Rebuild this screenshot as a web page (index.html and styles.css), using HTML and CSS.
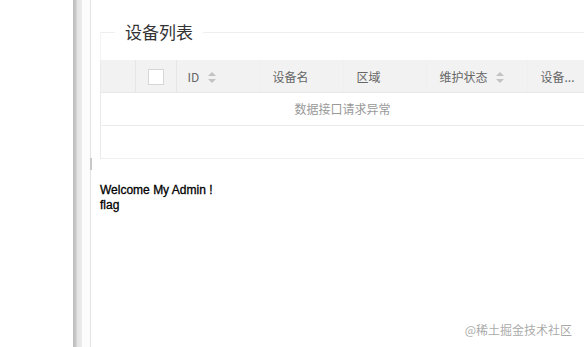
FILE: index.html
```html
<!DOCTYPE html>
<html lang="zh">
<head>
<meta charset="utf-8">
<link rel="stylesheet" href="styles.css">
</head>
<body>
<div class="page">
  <div class="gutter"></div>
  <div class="bar"></div>
  <div class="gap"></div>
  <div class="divider"><span class="handle"></span></div>
  <main class="main">
    <fieldset class="field">
      <legend class="legend">设备列表</legend>
      <div class="table-box">
        <table class="grid">
          <colgroup>
            <col class="c-num"><col class="c-check"><col class="c-id"><col class="c-name"><col class="c-area"><col class="c-state"><col class="c-more">
          </colgroup>
          <thead>
            <tr>
              <th></th>
              <th class="center"><span class="checkbox"></span></th>
              <th class="id">ID <svg class="sort" viewBox="0 0 8 11" width="8" height="11"><path d="M4 0 L8 4 H0 Z M0 7 H8 L4 11 Z" fill="#c2c2c2"/></svg></th>
              <th>设备名</th>
              <th>区域</th>
              <th>维护状态 <svg class="sort" viewBox="0 0 8 11" width="8" height="11"><path d="M4 0 L8 4 H0 Z M0 7 H8 L4 11 Z" fill="#c2c2c2"/></svg></th>
              <th>设备...</th>
            </tr>
          </thead>
        </table>
        <div class="none">数据接口请求异常</div>
        <div class="foot"></div>
      </div>
    </fieldset>
    <p class="welcome">Welcome My Admin !<br>flag</p>
  </main>
</div>
<div class="mark">@稀土掘金技术社区</div>
</body>
</html>
```
FILE: styles.css
```css
html, body {
  margin: 0;
  padding: 0;
  background: #fff;
  height: 100%;
  overflow: hidden;
}
body {
  font-family: "Liberation Sans", "Noto Sans CJK SC", sans-serif;
}
.page {
  display: flex;
  height: 347px;
}
.gutter {
  width: 73px;
  flex: none;
}
.bar {
  width: 9px;
  flex: none;
  background: linear-gradient(to right, #bdbdbd 0, #c9c9c9 3px, #e2e2e2 4px, #ececec 9px);
}
.gap {
  width: 8px;
  flex: none;
  background: #fcfcfc;
}
.divider {
  width: 1px;
  flex: none;
  background: #e4e4e4;
  position: relative;
}
.handle {
  position: absolute;
  left: 0;
  top: 158px;
  width: 2px;
  height: 12px;
  background: #c8c8c8;
}
.main {
  flex: 1;
  min-width: 0;
  padding: 20px 0 0 9px;
  overflow: hidden;
}
.field {
  margin: 0;
  padding: 16px 0 0 0;
  border: none;
  border-top: 1px solid #eeeeee;
  border-left: 1px solid #f3f3f3;
  min-width: 0;
}
.legend {
  margin-left: 14px;
  padding: 0 10px;
  font-family: "Noto Sans CJK SC", sans-serif;
  font-size: 17px;
  line-height: 24px;
  color: #333;
}
.table-box {
  margin-left: -1px;
  overflow: hidden;
  border-left: 1px solid #eaeaea;
}
.grid {
  border-collapse: collapse;
  table-layout: fixed;
  width: 506px;
  font-family: "Noto Sans CJK SC", sans-serif;
}
.c-num { width: 34px; }
.c-check { width: 41px; }
.c-id { width: 83px; }
.c-name { width: 84px; }
.c-area { width: 83px; }
.c-state { width: 101px; }
.c-more { width: 80px; }
.grid th {
  height: 32px;
  padding: 0 0 0 13px;
  background: #f2f2f2;
  border-right: 1px solid #efefef;
  border-bottom: 1px solid #e8e8e8;
  font-size: 12px;
  font-weight: normal;
  color: #666;
  text-align: left;
  white-space: nowrap;
  overflow: hidden;
}
.grid th.id {
  padding-left: 11px;
}
.grid th:first-child,
.grid th.center {
  padding: 0;
  text-align: center;
  border-right: 1px solid #e6e6e6;
}
.checkbox {
  display: inline-block;
  width: 14px;
  height: 14px;
  border: 1px solid #d6d6d6;
  background: #fff;
  vertical-align: middle;
}
.sort {
  vertical-align: middle;
  margin-left: 6px;
  position: relative;
  top: -1px;
}
.none {
  height: 32px;
  line-height: 32px;
  text-align: center;
  font-family: "Noto Sans CJK SC", sans-serif;
  font-size: 12px;
  color: #999;
  border-bottom: 1px solid #ececec;
}
.foot {
  height: 32px;
  border-bottom: 1px solid #f0f0f0;
}
.welcome {
  margin: 24px 0 0 0;
  font-family: "Liberation Sans", sans-serif;
  font-size: 12px;
  line-height: 15px;
  color: #000;
  -webkit-text-stroke: 0.3px #000;
}
.mark {
  position: absolute;
  right: 12px;
  bottom: 9px;
  font-family: "Noto Sans CJK SC", sans-serif;
  font-size: 12px;
  color: rgba(140, 140, 140, 0.75);
}
```
